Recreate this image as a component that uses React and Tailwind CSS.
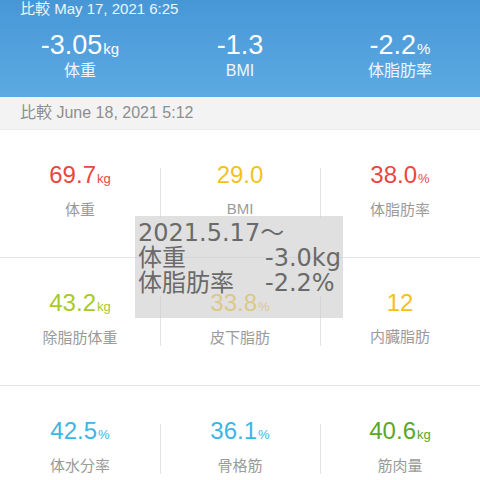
import React from 'react'

const rows = [
  [
    { v: '69.7', u: 'kg', label: '体重', color: 'text-[#e8483f]' },
    { v: '29.0', u: '', label: 'BMI', color: 'text-[#f2c21c]' },
    { v: '38.0', u: '%', label: '体脂肪率', color: 'text-[#e8483f]' },
  ],
  [
    { v: '43.2', u: 'kg', label: '除脂肪体重', color: 'text-[#a8c92a]' },
    { v: '33.8', u: '%', label: '皮下脂肪', color: 'text-[#f2c21c]' },
    { v: '12', u: '', label: '内臓脂肪', color: 'text-[#f4c01a]' },
  ],
  [
    { v: '42.5', u: '%', label: '体水分率', color: 'text-[#3cb6e6]' },
    { v: '36.1', u: '%', label: '骨格筋', color: 'text-[#3cb6e6]' },
    { v: '40.6', u: 'kg', label: '筋肉量', color: 'text-[#5aa826]' },
  ],
]

const diff = [
  { v: '-3.05', u: 'kg', label: '体重' },
  { v: '-1.3', u: '', label: 'BMI' },
  { v: '-2.2', u: '%', label: '体脂肪率' },
]

const Cell = ({ item, first }) => (
  <div className="relative flex flex-col items-center pt-[31px]">
    {!first && <div className="absolute left-0 top-[38px] h-[50px] w-px bg-[#e3e3e3]" />}
    <div className={`leading-[28px] ${item.color}`}>
      <span className="text-[24px]">{item.v}</span>
      {item.u && <span className="text-[13px] ml-[1px]">{item.u}</span>}
    </div>
    <div className="mt-[7px] text-[15px] leading-[20px] text-[#9b9b9b]">{item.label}</div>
  </div>
)

export default function App() {
  return (
    <div className="relative w-[480px] h-[480px] overflow-hidden bg-white font-['Liberation_Sans','Noto_Sans_CJK_JP',sans-serif]">
      {/* header */}
      <div className="h-[97px] bg-gradient-to-b from-[#4797d7] to-[#5daae2] text-white">
        <div className="px-5 text-[15px] leading-[18px] text-white/90">比較 May 17, 2021 6:25</div>
        <div className="grid grid-cols-3 mt-[13px]">
          {diff.map((d) => (
            <div key={d.label} className="flex flex-col items-center">
              <div className="leading-[28px]">
                <span className="text-[27px]">{d.v}</span>
                {d.u && <span className="text-[15px] ml-[1px]">{d.u}</span>}
              </div>
              <div className="-mt-[1px] text-[16px] leading-[18px] text-white/90">{d.label}</div>
            </div>
          ))}
        </div>
      </div>

      <div className="h-[33px] flex items-center px-5 bg-[#f3f3f3] border-b border-[#ececec] text-[16px] text-[#8e8e8e]">
        比較 June 18, 2021 5:12
      </div>

      {rows.map((row, i) => (
        <div key={i} className="grid grid-cols-3 h-[128px] border-b border-[#e6e6e6]">
          {row.map((item, j) => (
            <Cell key={item.label} item={item} first={j === 0} />
          ))}
        </div>
      ))}

      {/* note overlay */}
      <div className="absolute left-[135px] top-[216px] w-[208px] h-[102px] bg-[#cbcbcb]/60 pl-[3px] pt-[5px] text-[#6a6a6a] text-[24px] leading-[25px] font-['DejaVu_Sans','Noto_Sans_CJK_JP',sans-serif]">
        <div>2021.5.17〜</div>
        <div className="grid grid-cols-[127px_auto]">
          <span>体重</span>
          <span>-3.0kg</span>
          <span>体脂肪率</span>
          <span>-2.2%</span>
        </div>
      </div>
    </div>
  )
}
